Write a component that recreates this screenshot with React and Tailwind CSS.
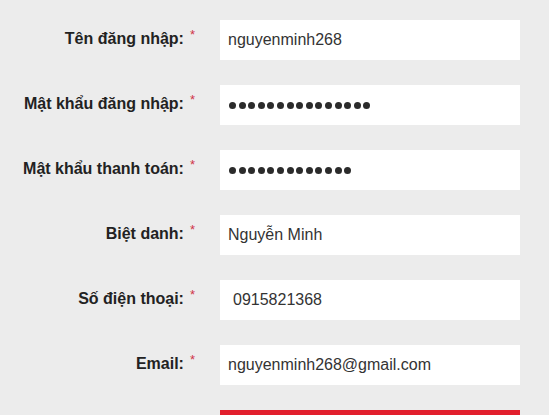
import React from 'react';

const fields = [
  { label: 'Tên đăng nhập:', value: 'nguyenminh268' },
  { label: 'Mật khẩu đăng nhập:', dots: 15 },
  { label: 'Mật khẩu thanh toán:', dots: 13 },
  { label: 'Biệt danh:', value: 'Nguyễn Minh' },
  { label: 'Số điện thoại:', value: '0915821368', indent: true },
  { label: 'Email:', value: 'nguyenminh268@gmail.com' },
];

const Dots = ({ count }) => (
  <div className="flex gap-[2.6px] pl-[1px]">
    {Array.from({ length: count }).map((_, i) => (
      <span key={i} className="w-[7px] h-[7px] rounded-full bg-[#2b2b2b]" />
    ))}
  </div>
);

export default function App() {
  return (
    <div className="w-[549px] h-[415px] overflow-hidden bg-[#ececec] font-['Liberation_Sans',Arial,sans-serif]">
      <div className="pt-[20px] flex flex-col gap-[25px]">
        {fields.map((f) => (
          <div key={f.label} className="flex items-start">
            <div className="w-[195px] flex justify-end pt-[7px]">
              <span className="text-[16px] font-bold text-[#222]">{f.label}</span>
              <span className="ml-[6px] text-[13px] leading-[16px] text-[#d0344a]">*</span>
            </div>
            <div className="ml-[25px] w-[300px] h-[40px] bg-white flex items-center pl-[8px] text-[16px] text-[#333]">
              {f.dots ? <Dots count={f.dots} /> : <span className={f.indent ? 'pl-[5px]' : ''}>{f.value}</span>}
            </div>
          </div>
        ))}
        <div className="ml-[220px] w-[300px] h-[40px] bg-[#e21f2d]" />
      </div>
    </div>
  );
}
